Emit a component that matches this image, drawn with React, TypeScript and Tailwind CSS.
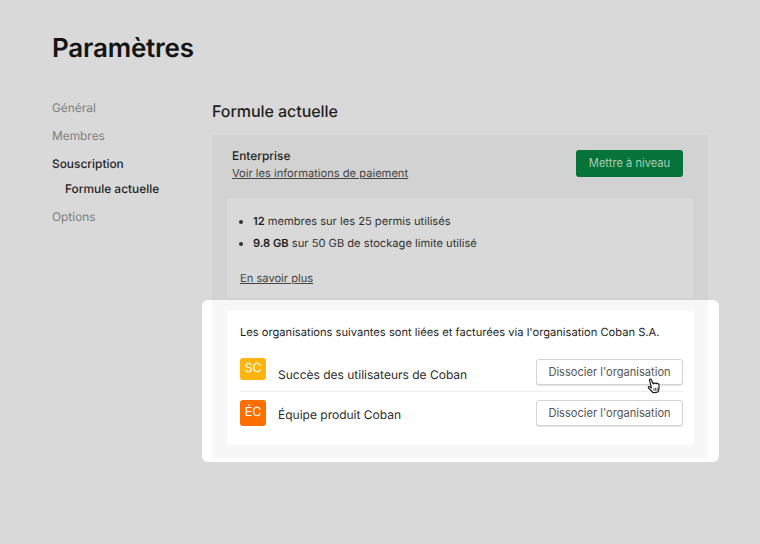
import React from 'react';

const HandCursor = () => (
  <svg
    className="absolute left-[647px] top-[378px]"
    width="15"
    height="17"
    viewBox="0 0 15 17"
    fill="none"
  >
    <path
      d="M2.600 2.300c-.3-1.100 1.300-1.700 1.800-.6l1.800 4.200c0-1 1.500-1.200 1.800-.2.200-.9 1.700-.9 1.900.1.400-.7 1.700-.4 1.900.6.300 1.500.500 3.300.1 4.700-.3 1-.6 1.700-.7 2.700-1.700.8-3.800 1-5.500.7-.8-1.300-1.800-2.400-3-3.300-1-.8-1.700-1.600-1.400-2.300.3-.6 1.100-.4 1.800 0l1.300 1L2.600 2.300z"
      fill="#ffffff"
      stroke="#1c1c1c"
      strokeWidth="1.200"
      strokeLinejoin="round"
    />
    <path d="M6.800 10l.3 3M8.500 9.800l.2 3M10.200 9.600v3" stroke="#444444" strokeWidth="0.900" />
  </svg>
);

export default function App() {
  return (
    <div className="relative h-[544px] w-[760px] overflow-hidden bg-[#d9d9d9] font-['Inter',sans-serif] text-[#1a1a1a] antialiased [text-rendering:geometricPrecision]">
      <div className="px-[52px] pt-[33px]">
        <h1 className="text-[26px] leading-[32px] font-semibold tracking-[-0.2px] text-[#141414]">Paramètres</h1>
        <div className="mt-[34px] flex">
          <nav className="w-[160px] pt-[1px] text-[11.9px] leading-[16px] text-[#7d7d7d]">
            <div>Général</div>
            <div className="mt-[12px]">Membres</div>
            <div className="mt-[12px] font-medium text-[#1f1f1f]">Souscription</div>
            <div className="mt-[9px] ml-[13px] font-medium text-[#1f1f1f]">Formule actuelle</div>
            <div className="mt-[12px]">Options</div>
          </nav>
          <main className="w-[496px]">
            <h2 className="text-[16px] leading-[24px] font-medium tracking-[-0.05px] text-[#1f1f1f]">Formule actuelle</h2>
            <div className="mt-[12px]">
              <section className="h-[165px] bg-[#d2d2d2] pt-[13px] pr-[14px] pl-[15px]">
                <div className="flex items-start justify-between pr-[11px] pl-[5px]">
                  <div>
                    <div className="text-[11.9px] leading-[16px] font-medium text-[#1f1f1f]">Enterprise</div>
                    <a className="mt-[1px] block text-[11.15px] leading-[16px] text-[#444444] underline">
                      Voir les informations de paiement
                    </a>
                  </div>
                  <button className="mt-[2px] h-[27px] w-[107px] rounded-[3px] bg-[#067339] text-[11.15px] text-[#a9cfb8]">
                    Mettre à niveau
                  </button>
                </div>
                <div className="mt-[17px] h-[100px] rounded-[3px] bg-[#d9d9d9] px-[13px] pt-[15px] text-[11.15px] leading-[16px] text-[#333333]">
                  <ul className="ml-[13px] list-disc">
                    <li>
                      <strong className="font-semibold text-[#1f1f1f]">12</strong> membres sur les 25 permis utilisés
                    </li>
                    <li className="mt-[6px]">
                      <strong className="font-semibold text-[#1f1f1f]">9.8 GB</strong> sur 50 GB de stockage limite utilisé
                    </li>
                  </ul>
                  <a className="mt-[19px] block text-[#444444] underline">En savoir plus</a>
                </div>
              </section>
              <section className="-mx-[10px] w-[517px] rounded-[6px] bg-white pb-[4px]">
                <div className="ml-[10px] w-[496px] bg-[#f7f7f7] pt-[10px] pr-[14px] pb-[13px] pl-[15px]">
                  <div className="h-[135px] rounded-[3px] bg-white pt-[14px] pr-[11px] pl-[13px]">
                    <p className="text-[11.15px] leading-[16px] text-[#1f1f1f]">
                      Les organisations suivantes sont liées et facturées via l'organisation Coban S.A.
                    </p>
                    <div className="mt-[18px] flex h-[34px] items-start border-b border-[#eeeeee]">
                      <div className="flex h-[22px] w-[26px] items-center justify-center rounded-[3px] bg-[#ffb30f] text-[12.5px] text-white">
                        SC
                      </div>
                      <span className="mt-[9px] ml-[12px] text-[12px] leading-[16px] text-[#2b2b2b]">
                        Succès des utilisateurs de Coban
                      </span>
                      <button className="mt-[1px] ml-auto h-[26px] w-[147px] rounded-[3px] border border-[#d4d4d4] bg-white text-[11.1px] text-[#555555] shadow-[0_1px_1px_rgba(0,0,0,0.12)]">
                        Dissocier l'organisation
                      </button>
                    </div>
                    <div className="mt-[8px] flex items-start">
                      <div className="flex h-[26px] w-[26px] items-center justify-center rounded-[3px] bg-[#ff6f00] text-[12.5px] text-white">
                        ÉC
                      </div>
                      <span className="mt-[7px] ml-[12px] text-[12px] leading-[16px] text-[#2b2b2b]">
                        Équipe produit Coban
                      </span>
                      <button className="ml-auto h-[26px] w-[147px] rounded-[3px] border border-[#d4d4d4] bg-white text-[11.1px] text-[#555555] shadow-[0_1px_1px_rgba(0,0,0,0.12)]">
                        Dissocier l'organisation
                      </button>
                    </div>
                  </div>
                </div>
              </section>
            </div>
          </main>
        </div>
      </div>
      <HandCursor />
    </div>
  );
}
